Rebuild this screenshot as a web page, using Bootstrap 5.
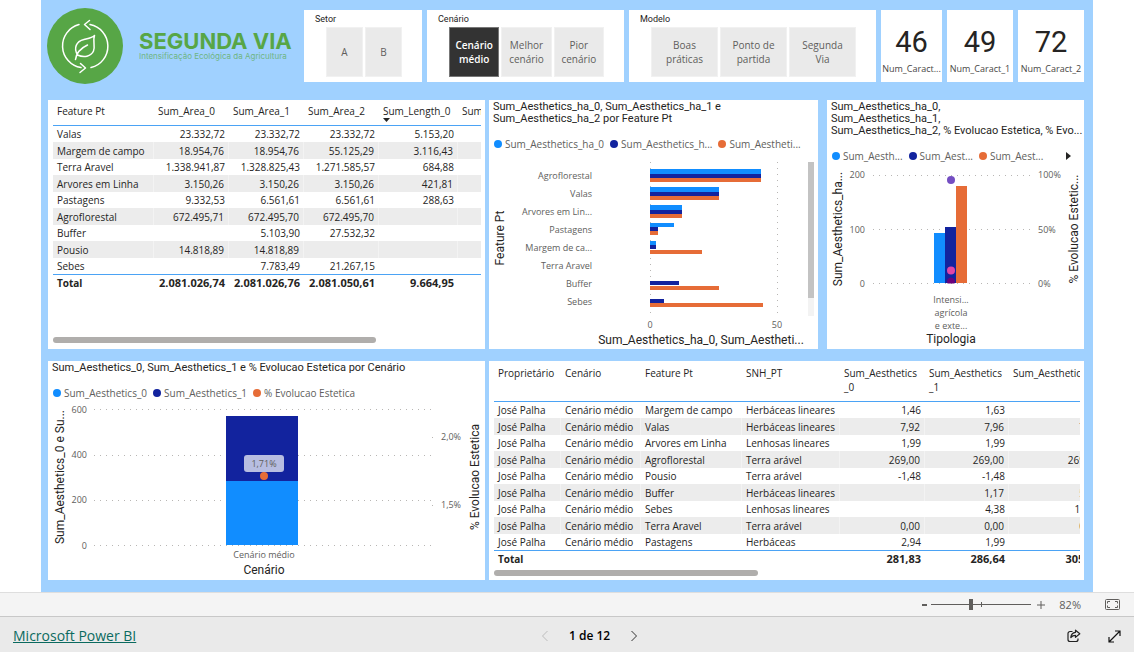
<!DOCTYPE html>
<html lang="pt">
<head>
<meta charset="utf-8">
<meta name="viewport" content="width=device-width, initial-scale=1">
<title>Segunda Via</title>
<link href="https://cdn.jsdelivr.net/npm/bootstrap@5.3.0/dist/css/bootstrap.min.css" rel="stylesheet">
<style>
  :root { --ui: "Open Sans", "Noto Sans", sans-serif; --din: Roboto, "Liberation Sans", sans-serif; }
  body { font-family: var(--ui); font-size: 11px; line-height: 14px; color: #252423; background: #fff; }
  .stage { padding: 0 41px; }
  .canvas { background: #a0d1ff; padding: 10px 9px 12px 7px; }
  .tile { background: #fff; min-width: 0; }
  .top-grid { display: grid; gap: 5px; min-height: 72px; margin-bottom: 18px;
    grid-template-columns: 251fr 118fr 197fr 247fr 61fr 66fr 66fr; }
  .mid-grid { display: grid; column-gap: 4px; grid-template-columns: 437fr 595fr; margin-bottom: 12px; }
  .pair { display: grid; column-gap: 9px; grid-template-columns: 329fr 257fr; min-width: 0; }
  .low-grid { display: grid; column-gap: 4px; grid-template-columns: 437fr 595fr; }

  .brand { margin: -2px 0 -2px -1px; min-width: 0; }
  .brand-disc { width: 76px; height: 76px; flex: none; }
  .brand-name { font: 700 22px/20px Inter, sans-serif; color: #57a646; }
  .brand-line { font: 400 8px/10px Inter, sans-serif; color: #6fb583; white-space: nowrap; }

  .slicer { padding: 4px 20px 5px 22px; }
  .slicer h2 { font: 400 9px/11px var(--din); margin: 0 0 2px -11px; }
  .slicer div { gap: 2px; }
  .slicer button { flex: 1 1 0; height: 50px; padding: 0; border: 1px solid #f1f1f1; border-radius: 0;
    background: #eaeaea; color: #605e5c; font-size: 10px; line-height: 14px; }
  .slicer button.active { background: #333; color: #fff; border-color: #777; font-weight: 600; }

  .kpi-num { font: 400 29px/32px var(--din); }
  .kpi-name { font-size: 9px; line-height: 12px; color: #484644; margin-top: 5px; }

  .viz-title { font: 400 11px/12px var(--din); margin: 0; padding: 1px 4px 0; white-space: nowrap; }
  .legend-row { color: #605e5c; font-size: 10px; line-height: 14px; display: flex; gap: 6px; padding: 12px 5px 0; }
  .legend-row span { display: flex; align-items: center; gap: 3px; white-space: nowrap; }
  .legend-row i { width: 8px; height: 8px; border-radius: 50%; flex: none; }
  .c-blue { background: #118dff; } .c-navy { background: #12239e; } .c-orange { background: #e66c37; }
  svg.plot { display: block; width: 100%; height: auto; }
  .plot text { font-family: var(--ui); font-size: 9px; fill: #605e5c; }
  .plot text.axis { font-family: var(--din); font-size: 12px; fill: #252423; }
  .plot .e { text-anchor: end; } .plot .m { text-anchor: middle; }
  .plot .grid-lines { stroke: #b8b6b4; stroke-width: 1; stroke-dasharray: 1 5; }
  .f-blue { fill: #118dff; } .f-navy { fill: #12239e; } .f-orange { fill: #e66c37; }

  .clip-box { overflow: hidden; }
  .data { table-layout: fixed; border-collapse: separate; border-spacing: 0; font-size: 10px; }
  .data th, .data td { padding: 0 4px; height: 16px; line-height: 14px; white-space: nowrap; vertical-align: middle; font-weight: 400; }
  .data td.n { text-align: right; }
  .data tbody tr:nth-child(even) > * { height: 17px; background: #ececec; border-right: 1px solid #f3f3f3; }
  .data thead th { vertical-align: top; border-bottom: 1px solid #4ba3f5; }
  .data tfoot > tr > * { border-top: 1px solid #4ba3f5; font-weight: 700; }
  .data tfoot td.n { font-size: 11px; }
  .areas { width: 484px; }
  .areas thead th { height: 26px; padding-top: 4px; position: relative; }
  .areas thead svg { position: absolute; left: 4px; bottom: 3px; }
  .scores { width: 610px; }
  .scores thead th { height: 37px; padding-top: 1px; }
  .hbar { height: 6px; border-radius: 3px; background: #b0aeac; }

  .zoombar { background: #f4f4f4; border-top: 1px solid #dedede; height: 24px; color: #605e5c; font-size: 11px; padding-right: 14px; }
  .zoombar button, .pager button, .tools button { border: 0; background: none; padding: 0; display: flex; align-items: center; justify-content: center; color: inherit; }
  .zoombar input { -webkit-appearance: none; appearance: none; width: 100px; height: 12px; margin: 0;
    background: linear-gradient(#605e5c,#605e5c) 50% 50%/100% 1px no-repeat, linear-gradient(#605e5c,#605e5c) 50% 50%/1px 5px no-repeat; }
  .zoombar input::-webkit-slider-thumb { -webkit-appearance: none; width: 4px; height: 11px; background: #605e5c; }
  .foot { background: #eaeaea; border-top: 1px solid #c8c8c8; height: 36px; display: grid; align-items: center;
    grid-template-columns: 35fr auto 32fr; padding: 3px 13px 0; }
  .foot a { color: #0b6a5f; font-size: 14px; line-height: 18px; }
  .pager { font-size: 12px; line-height: 18px; font-weight: 600; color: #000; gap: 20px; }
</style>
</head>
<body class="d-flex flex-column min-vh-100">
<main class="stage flex-grow-1">
<div class="canvas">
  <div class="top-grid">
    <header class="brand d-flex align-items-center">
      <svg class="brand-disc" viewBox="0 0 76 76" fill="none" stroke="#fff" stroke-width="1.5" stroke-linecap="round" stroke-linejoin="round" aria-hidden="true">
        <circle cx="38" cy="38" r="38" fill="#57a646" stroke="none"/>
        <path d="M32 16.600A22 22 0 0 0 34 59.600M44 59.600A22 22 0 0 0 43 16.600"/>
        <path d="M42.500 12.500L37.500 16.500L43 21.500M33.500 55.500L38.500 60L33 64.500"/>
        <path d="M47.500 27.500C45 30 41 30.500 37 31.500C29 33.500 26.500 40 30.500 47C37 50 44 48.500 46.500 43C48.500 38.500 45.500 33 47.500 27.500ZM28.500 51.500C29.500 44 34 40 40.500 37"/>
      </svg>
      <div class="ms-3">
        <div class="brand-name text-nowrap">SEGUNDA VIA</div>
        <div class="brand-line">Intensificação Ecológica da Agricultura</div>
      </div>
    </header>
    <section class="tile slicer"><h2>Setor</h2>
      <div class="d-flex"><button type="button">A</button><button type="button">B</button></div></section>
    <section class="tile slicer"><h2>Cenário</h2>
      <div class="d-flex"><button type="button" class="active">Cenário<br>médio</button><button type="button">Melhor<br>cenário</button><button type="button">Pior<br>cenário</button></div></section>
    <section class="tile slicer"><h2>Modelo</h2>
      <div class="d-flex"><button type="button">Boas<br>práticas</button><button type="button">Ponto de<br>partida</button><button type="button">Segunda<br>Via</button></div></section>
    <section class="tile text-center pt-3"><div class="kpi-num">46</div><div class="kpi-name">Num_Caract...</div></section>
    <section class="tile text-center pt-3"><div class="kpi-num">49</div><div class="kpi-name">Num_Caract_1</div></section>
    <section class="tile text-center pt-3"><div class="kpi-num">72</div><div class="kpi-name">Num_Caract_2</div></section>
  </div>

  <div class="mid-grid">
    <section class="tile d-flex flex-column" style="padding:0 4px 6px 5px">
      <div class="clip-box">
      <table class="data areas">
        <colgroup><col style="width:101px"><col style="width:75px"><col style="width:75px"><col style="width:75px"><col style="width:79px"><col style="width:79px"></colgroup>
        <thead><tr><th>Feature Pt</th><th>Sum_Area_0</th><th>Sum_Area_1</th><th>Sum_Area_2</th><th>Sum_Length_0<svg width="7" height="4" aria-hidden="true"><path d="M0 0H7L3.500 4Z" fill="#252423"/></svg></th><th>Sum_Length_1</th></tr></thead>
        <tbody>
          <tr><td>Valas</td><td class="n">23.332,72</td><td class="n">23.332,72</td><td class="n">23.332,72</td><td class="n">5.153,20</td><td></td></tr>
          <tr><td>Margem de campo</td><td class="n">18.954,76</td><td class="n">18.954,76</td><td class="n">55.125,29</td><td class="n">3.116,43</td><td></td></tr>
          <tr><td>Terra Aravel</td><td class="n">1.338.941,87</td><td class="n">1.328.825,43</td><td class="n">1.271.585,57</td><td class="n">684,88</td><td></td></tr>
          <tr><td>Arvores em Linha</td><td class="n">3.150,26</td><td class="n">3.150,26</td><td class="n">3.150,26</td><td class="n">421,81</td><td></td></tr>
          <tr><td>Pastagens</td><td class="n">9.332,53</td><td class="n">6.561,61</td><td class="n">6.561,61</td><td class="n">288,63</td><td></td></tr>
          <tr><td>Agroflorestal</td><td class="n">672.495,71</td><td class="n">672.495,70</td><td class="n">672.495,70</td><td></td><td></td></tr>
          <tr><td>Buffer</td><td></td><td class="n">5.103,90</td><td class="n">27.532,32</td><td></td><td></td></tr>
          <tr><td>Pousio</td><td class="n">14.818,89</td><td class="n">14.818,89</td><td></td><td></td><td></td></tr>
          <tr><td>Sebes</td><td></td><td class="n">7.783,49</td><td class="n">21.267,15</td><td></td><td></td></tr>
        </tbody>
        <tfoot><tr><th>Total</th><td class="n">2.081.026,74</td><td class="n">2.081.026,76</td><td class="n">2.081.050,61</td><td class="n">9.664,95</td><td></td></tr></tfoot>
      </table>
      </div>
      <div class="hbar mt-auto" style="width:75.500%"></div>
    </section>

    <div class="pair">
      <section class="tile">
        <h2 class="viz-title">Sum_Aesthetics_ha_0, Sum_Aesthetics_ha_1 e<br>Sum_Aesthetics_ha_2 por Feature Pt</h2>
        <div class="legend-row"><span><i class="c-blue"></i>Sum_Aesthetics_ha_0</span><span><i class="c-navy"></i>Sum_Aesthetics_h...</span><span><i class="c-orange"></i>Sum_Aestheti...</span></div>
        <svg class="plot" viewBox="489 151 329 198" role="img" aria-label="Sum_Aesthetics por Feature Pt">
          <path class="grid-lines" d="M650.500 162V316M777.500 162V316"/>
          <g class="f-blue"><rect x="650" y="169" width="111" height="5"/><rect x="650" y="187" width="69" height="5"/><rect x="650" y="205" width="32" height="5"/><rect x="650" y="223" width="24" height="4"/><rect x="650" y="241" width="6" height="4"/></g>
          <g class="f-navy"><rect x="650" y="174" width="111" height="4"/><rect x="650" y="192" width="69" height="4"/><rect x="650" y="210" width="32" height="4"/><rect x="650" y="227" width="8" height="4"/><rect x="650" y="245" width="6" height="4"/><rect x="650" y="281" width="29" height="4"/><rect x="650" y="299" width="14" height="4"/></g>
          <g class="f-orange"><rect x="650" y="178" width="111" height="4"/><rect x="650" y="196" width="69" height="4"/><rect x="650" y="214" width="32" height="4"/><rect x="650" y="231" width="8" height="4"/><rect x="650" y="250" width="52" height="4"/><rect x="650" y="286" width="69" height="4"/><rect x="650" y="303" width="113" height="4"/></g>
          <g class="e"><text x="592" y="179">Agroflorestal</text><text x="592" y="197">Valas</text><text x="592" y="215">Arvores em Lin...</text><text x="592" y="233">Pastagens</text><text x="592" y="251">Margem de ca...</text><text x="592" y="269">Terra Aravel</text><text x="592" y="287">Buffer</text><text x="592" y="305">Sebes</text></g>
          <g class="m"><text x="650" y="328">0</text><text x="777" y="328">50</text><text class="axis" x="701" y="344">Sum_Aesthetics_ha_0, Sum_Aestheti...</text>
          <text class="axis" transform="translate(504 238) rotate(-90)">Feature Pt</text></g>
          <rect x="808" y="162" width="6" height="154" fill="#f3f3f3"/><rect x="808" y="162" width="6" height="136" fill="#c3c3c3"/>
        </svg>
      </section>
      <section class="tile">
        <h2 class="viz-title">Sum_Aesthetics_ha_0,<br>Sum_Aesthetics_ha_1,<br>Sum_Aesthetics_ha_2, % Evolucao Estetica, % Evo...</h2>
        <div class="legend-row"><span><i class="c-blue"></i>Sum_Aesth...</span><span><i class="c-navy"></i>Sum_Aest...</span><span><i class="c-orange"></i>Sum_Aest...</span><span class="ms-auto pe-2"><svg width="5" height="8" aria-hidden="true"><path d="M0 0L5 4L0 8Z" fill="#252423"/></svg></span></div>
        <svg class="plot" viewBox="827 163 257 186" role="img" aria-label="Sum_Aesthetics por Tipologia">
          <path class="grid-lines" d="M873 175.500H1031M873 229.500H1031M873 283.500H1031"/>
          <rect class="f-blue" x="934" y="233" width="11" height="50"/><rect class="f-navy" x="945" y="227" width="11" height="56"/><rect class="f-orange" x="956" y="186" width="11" height="97"/>
          <circle cx="951" cy="180" r="4" fill="#744ec2"/><circle cx="951" cy="270.500" r="4" fill="#e044a7"/><path d="M947.500 283.500A4 4 0 1 1 954.500 283.500Z" fill="#6b007b"/>
          <g class="e"><text x="865" y="178">200</text><text x="865" y="233">100</text><text x="865" y="287">0</text></g>
          <text x="1038" y="178">100%</text><text x="1038" y="233">50%</text><text x="1038" y="287">0%</text>
          <g class="m"><text x="951" y="303">Intensi...</text><text x="951" y="316">agrícola</text><text x="951" y="329">e exte...</text><text class="axis" x="951" y="343">Tipologia</text>
          <text class="axis" transform="translate(842 229) rotate(-90)">Sum_Aesthetics_ha...</text><text class="axis" transform="translate(1078 229) rotate(-90)">% Evolucao Estetic...</text></g>
        </svg>
      </section>
    </div>
  </div>

  <div class="low-grid">
    <section class="tile">
      <h2 class="viz-title">Sum_Aesthetics_0, Sum_Aesthetics_1 e % Evolucao Estetica por Cenário</h2>
      <div class="legend-row"><span><i class="c-blue"></i>Sum_Aesthetics_0</span><span><i class="c-navy"></i>Sum_Aesthetics_1</span><span><i class="c-orange"></i>% Evolucao Estetica</span></div>
      <svg class="plot" viewBox="48 400 437 180" role="img" aria-label="Sum_Aesthetics por Cenário">
        <path class="grid-lines" d="M94 409.500H433M94 455.500H433M94 500.500H433M94 545.500H433M432 437.500H433M432 505.500H433"/>
        <rect class="f-navy" x="226" y="416" width="72" height="65"/><rect class="f-blue" x="226" y="481" width="72" height="64"/>
        <rect x="244" y="455" width="40" height="17" rx="3" fill="#b7bde1"/><text class="m" x="264" y="467">1,71%</text>
        <circle class="f-orange" cx="264" cy="476" r="4"/>
        <g class="e"><text x="87" y="413">600</text><text x="87" y="458">400</text><text x="87" y="503">200</text><text x="87" y="549">0</text></g>
        <text x="441" y="440">2,0%</text><text x="441" y="508">1,5%</text>
        <g class="m"><text x="264" y="558">Cenário médio</text><text class="axis" x="264" y="574">Cenário</text>
        <text class="axis" transform="translate(64 477) rotate(-90)">Sum_Aesthetics_0 e Su...</text><text class="axis" transform="translate(479 477) rotate(-90)">% Evolucao Estetica</text></g>
      </svg>
    </section>
    <section class="tile d-flex flex-column" style="padding:4px 4px 4px 5px">
      <div class="clip-box">
      <table class="data scores">
        <colgroup><col style="width:67px"><col style="width:80px"><col style="width:101px"><col style="width:98px"><col style="width:85px"><col style="width:84px"><col style="width:95px"></colgroup>
        <thead><tr><th>Proprietário</th><th>Cenário</th><th>Feature Pt</th><th>SNH_PT</th><th>Sum_Aesthetics<br>_0</th><th>Sum_Aesthetics<br>_1</th><th>Sum_Aesthetics_2</th></tr></thead>
        <tbody>
          <tr><td>José Palha</td><td>Cenário médio</td><td>Margem de campo</td><td>Herbáceas lineares</td><td class="n">1,46</td><td class="n">1,63</td><td class="n">6,12</td></tr>
          <tr><td>José Palha</td><td>Cenário médio</td><td>Valas</td><td>Herbáceas lineares</td><td class="n">7,92</td><td class="n">7,96</td><td class="n">7,96</td></tr>
          <tr><td>José Palha</td><td>Cenário médio</td><td>Arvores em Linha</td><td>Lenhosas lineares</td><td class="n">1,99</td><td class="n">1,99</td><td class="n">1,99</td></tr>
          <tr><td>José Palha</td><td>Cenário médio</td><td>Agroflorestal</td><td>Terra arável</td><td class="n">269,00</td><td class="n">269,00</td><td class="n">269,00</td></tr>
          <tr><td>José Palha</td><td>Cenário médio</td><td>Pousio</td><td>Terra arável</td><td class="n">-1,48</td><td class="n">-1,48</td><td></td></tr>
          <tr><td>José Palha</td><td>Cenário médio</td><td>Buffer</td><td>Herbáceas lineares</td><td></td><td class="n">1,17</td><td class="n">5,80</td></tr>
          <tr><td>José Palha</td><td>Cenário médio</td><td>Sebes</td><td>Lenhosas lineares</td><td></td><td class="n">4,38</td><td class="n">12,60</td></tr>
          <tr><td>José Palha</td><td>Cenário médio</td><td>Terra Aravel</td><td>Terra arável</td><td class="n">0,00</td><td class="n">0,00</td><td class="n">0,00</td></tr>
          <tr><td>José Palha</td><td>Cenário médio</td><td>Pastagens</td><td>Herbáceas</td><td class="n">2,94</td><td class="n">1,99</td><td class="n">1,99</td></tr>
        </tbody>
        <tfoot><tr><th>Total</th><td></td><td></td><td></td><td class="n">281,83</td><td class="n">286,64</td><td class="n">305,46</td></tr></tfoot>
      </table>
      </div>
      <div class="hbar mt-auto" style="width:45%"></div>
    </section>
  </div>
</div>
</main>

<div class="zoombar d-flex align-items-center justify-content-end">
  <button type="button" aria-label="Reduzir" style="width:14px">
    <svg width="5" height="2" aria-hidden="true"><rect width="5" height="2" fill="#605e5c"/></svg></button>
  <input type="range" min="10" max="194" value="82" aria-label="Zoom">
  <button type="button" aria-label="Ampliar" style="width:20px"><svg width="8" height="8" stroke="#605e5c" aria-hidden="true"><path d="M4 0V8M0 4H8"/></svg></button>
  <span class="text-end" style="width:30px">82%</span>
  <button type="button" class="ms-4" aria-label="Ajustar à página"><svg width="15" height="11" fill="none" stroke="#605e5c" aria-hidden="true"><rect x=".5" y=".5" width="14" height="10" rx="1"/><path d="M2.500 4.500V2.500H5M10 2.500H12.500V4.500M12.500 6.500V8.500H10M5 8.500H2.500V6.500"/></svg></button>
</div>
<footer class="foot">
  <div><a href="#">Microsoft Power BI</a></div>
  <nav class="pager d-flex align-items-center" aria-label="Páginas">
    <button type="button" aria-label="Anterior" disabled><svg width="8" height="12" fill="none" stroke="#bdbdbd" aria-hidden="true"><path d="M6.500 1L1.500 6L6.500 11"/></svg></button>
    <span>1 de 12</span>
    <button type="button" aria-label="Próxima"><svg width="8" height="12" fill="none" stroke="#333" aria-hidden="true"><path d="M1.500 1L6.500 6L1.500 11"/></svg></button>
  </nav>
  <div class="tools d-flex justify-content-end align-items-center" style="gap:27px">
    <button type="button" aria-label="Partilhar"><svg width="14" height="14" fill="none" stroke="#222" stroke-width="1.200" stroke-linejoin="round" aria-hidden="true"><path d="M5.500 2.500H3A2 2 0 0 0 1 4.500V10.500A2 2 0 0 0 3 12.500H9A2 2 0 0 0 11 10.500V9.500"/><path d="M8.500 1.200L12.800 4.800L8.500 8.400V6.400C6.500 6.400 5 7 3.800 8.600C4 5.600 5.600 3.600 8.500 3.300Z"/></svg></button>
    <button type="button" aria-label="Ecrã inteiro"><svg width="13" height="13" fill="none" stroke="#111" stroke-width="1.200" aria-hidden="true"><path d="M1 12L12 1M7 1H12V6M1 7V12H6"/></svg></button>
  </div>
</footer>
<script src="https://cdn.jsdelivr.net/npm/bootstrap@5.3.0/dist/js/bootstrap.bundle.min.js"></script>
</body>
</html>
